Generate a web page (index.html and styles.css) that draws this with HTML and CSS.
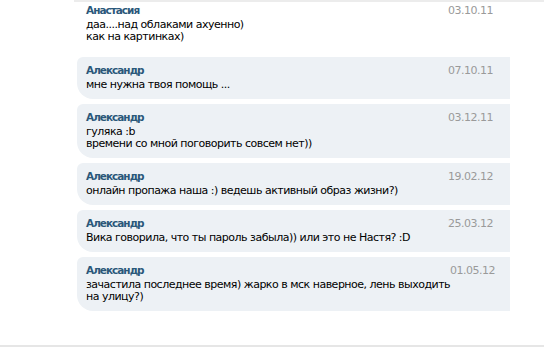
FILE: index.html
```html
<!DOCTYPE html>
<html lang="ru">
<head>
  <meta charset="UTF-8">
  <meta name="viewport" content="width=device-width, initial-scale=1.0">
  <title>Сообщения</title>
  <link rel="stylesheet" href="styles.css">
</head>
<body>
  <!-- Хвост предыдущего сообщения -->
  <div class="prev-edge"></div>

  <div class="messages">
    <div class="msg msg-read msg-first">
      <div class="msg-body">
        <div class="msg-author">Анастасия</div>
        <div class="msg-text">даа....над облаками ахуенно)<br>как на картинках)</div>
      </div>
      <div class="msg-date">03.10.11</div>
    </div>

    <div class="msg">
      <div class="msg-body">
        <div class="msg-author">Александр</div>
        <div class="msg-text">мне нужна твоя помощь ...</div>
      </div>
      <div class="msg-date">07.10.11</div>
    </div>

    <div class="msg">
      <div class="msg-body">
        <div class="msg-author">Александр</div>
        <div class="msg-text">гуляка :b<br>времени со мной поговорить совсем нет))</div>
      </div>
      <div class="msg-date">03.12.11</div>
    </div>

    <div class="msg">
      <div class="msg-body">
        <div class="msg-author">Александр</div>
        <div class="msg-text">онлайн пропажа наша :) ведешь активный образ жизни?)</div>
      </div>
      <div class="msg-date">19.02.12</div>
    </div>

    <div class="msg">
      <div class="msg-body">
        <div class="msg-author">Александр</div>
        <div class="msg-text">Вика говорила, что ты пароль забыла)) или это не Настя? :D</div>
      </div>
      <div class="msg-date">25.03.12</div>
    </div>

    <div class="msg">
      <div class="msg-body">
        <div class="msg-author">Александр</div>
        <div class="msg-text">зачастила последнее время) жарко в мск наверное, лень выходить<br>на улицу?)</div>
      </div>
      <div class="msg-date">01.05.12</div>
    </div>
  </div>

  <div class="page-footer"></div>
</body>
</html>
```

FILE: styles.css
```css
/* Base */
:root {
  --name-color: #2b587a;
  --date-color: #9a9a9a;
  --unread-bg: #edf1f5;
  --line-color: #e6e6e6;
}

* {
  margin: 0;
  padding: 0;
  box-sizing: border-box;
}

body {
  font-family: Tahoma, "DejaVu Sans", sans-serif;
  font-size: 11px;
  line-height: 13px;
  letter-spacing: -0.5px;
  color: #000;
  background: #fff;
  width: 544px;
  height: 347px;
  overflow: hidden;
}

.prev-edge {
  height: 2px;
  margin-left: 74px;
  background: #ececec;
}

/* Список сообщений */
.messages {
  width: 510px;
  padding-left: 77px;
  display: flex;
  flex-direction: column;
  gap: 5px;
}

.msg {
  display: flex;
  justify-content: space-between;
  background: var(--unread-bg);
  padding: 7px 17px 8px 9px;
  border-radius: 6px 0 0 16px;
}

.msg-read {
  background: #fff;
}

.msg-first {
  padding-top: 2px;
  height: 50px;
}

.msg-author {
  color: var(--name-color);
  font-size: 10.5px;
  font-weight: bold;
  letter-spacing: -1px;
  margin-bottom: 2px;
}

.msg-text {
  line-height: 12px;
  white-space: nowrap;
}

.msg-date {
  color: var(--date-color);
  flex-shrink: 0;
}

/* Низ */
.page-footer {
  margin-top: 34px;
  border-top: 2px solid var(--line-color);
}
```
